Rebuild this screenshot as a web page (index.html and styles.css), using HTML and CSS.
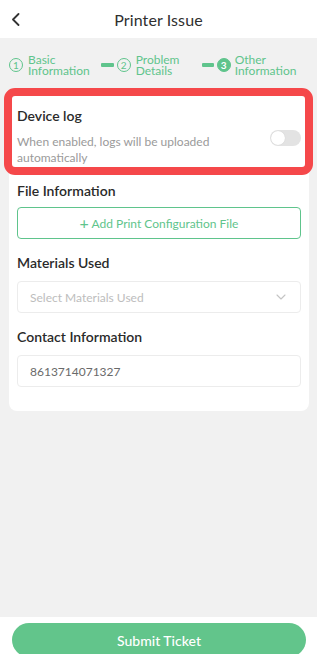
FILE: index.html
```html
<!DOCTYPE html>
<html lang="en">
<head>
<meta charset="utf-8">
<title>Printer Issue</title>
<link rel="stylesheet" href="styles.css">
</head>
<body>
<div class="page">
  <header class="topbar">
    <span class="back">
      <svg width="9" height="13" viewBox="0 0 9 13"><path d="M7.5 1 L2 6.5 L7.5 12" fill="none" stroke="#333" stroke-width="1.8" stroke-linecap="round" stroke-linejoin="round"/></svg>
    </span>
    <h1 class="title">Printer Issue</h1>
  </header>

  <main class="main">
    <div class="steps">
      <div class="step">
        <span class="circle">1</span>
        <span class="step-text"><span class="line">Basic</span><span class="line">Information</span></span>
      </div>
      <span class="dash dash-1"></span>
      <div class="step">
        <span class="circle">2</span>
        <span class="step-text step-text-2"><span class="line">Problem</span><span class="line">Details</span></span>
      </div>
      <span class="dash dash-2"></span>
      <div class="step">
        <span class="circle circle-active">3</span>
        <span class="step-text"><span class="line">Other</span><span class="line">Information</span></span>
      </div>
    </div>

    <section class="card">
      <div class="device-log">
        <div class="device-text">
          <div class="label">Device log</div>
          <div class="desc">When enabled, logs will be uploaded automatically</div>
        </div>
        <span class="toggle"><span class="knob"></span></span>
        <div class="highlight"></div>
      </div>

      <div class="label">File Information</div>
      <button class="add-file"><span class="plus">+</span> Add Print Configuration File</button>

      <div class="label label-gap">Materials Used</div>
      <div class="field select">
        <span class="placeholder">Select Materials Used</span>
        <svg width="10" height="6" viewBox="0 0 10 6"><path d="M1 1 L5 5 L9 1" fill="none" stroke="#c4c4c4" stroke-width="1.1" stroke-linecap="round" stroke-linejoin="round"/></svg>
      </div>

      <div class="label label-gap">Contact Information</div>
      <div class="field">
        <span class="value">8613714071327</span>
      </div>
    </section>
  </main>

  <footer class="footer">
    <button class="submit">Submit Ticket</button>
  </footer>
</div>
</body>
</html>
```

FILE: styles.css
```css
* { box-sizing: border-box; }
html, body {
  margin: 0;
  padding: 0;
  height: 654px;
  overflow: hidden;
}
body {
  font-family: Lato, "Noto Sans", sans-serif;
  background: #f1f1f1;
  color: #333;
}
.page {
  display: flex;
  flex-direction: column;
  height: 660px;
}
.topbar {
  height: 38px;
  background: #fff;
  display: flex;
  align-items: center;
  justify-content: center;
  position: relative;
}
.back {
  position: absolute;
  left: 11px;
  top: 13px;
  display: flex;
}
.title {
  margin: 0;
  font-size: 16px;
  font-weight: 400;
  color: #2f2f2f;
  letter-spacing: 0.1px;
}
.main {
  flex: 1;
}
.steps {
  display: flex;
  align-items: flex-start;
  padding: 16px 0 0 9px;
  height: 56px;
  color: #5fc48c;
}
.step {
  display: flex;
  align-items: center;
  height: 22px;
}
.circle {
  width: 14px;
  height: 14px;
  border: 1px solid #5fc48c;
  border-radius: 50%;
  font-size: 10px;
  line-height: 12px;
  text-align: center;
  color: #5fc48c;
  margin-right: 5px;
  flex: none;
}
.circle-active {
  background: #5fc48c;
  color: #fff;
  font-weight: 700;
  margin-right: 4px;
}
.step-text {
  display: flex;
  flex-direction: column;
  font-size: 12px;
}
.line {
  display: block;
  height: 11px;
  line-height: 11px;
  overflow: visible;
}
.step-text-2 {
  min-width: 63px;
}
.dash {
  width: 13px;
  height: 4px;
  border-radius: 1px;
  background: #5fc48c;
  margin-top: 9px;
  margin-right: 3px;
}
.dash-1 { margin-left: 11px; }
.dash-2 { margin-left: 3px; width: 12px; }

.card {
  margin: 0 8px 0 9px;
  background: #fff;
  border-radius: 8px;
  padding: 12px 8px 24px;
}
.device-log {
  position: relative;
  display: flex;
  align-items: center;
  justify-content: space-between;
  padding-bottom: 15px;
}
.device-text {
  max-width: 232px;
}
.label {
  font-size: 14px;
  line-height: 20px;
  font-weight: 600;
  color: #2a2a2a;
}
.label-gap {
  margin-top: 14px;
}
.desc {
  margin-top: 8px;
  font-size: 12px;
  line-height: 16px;
  color: #9a9a9a;
}
.toggle {
  width: 31px;
  height: 16px;
  border-radius: 8px;
  background: #e3e3e3;
  position: relative;
  margin-top: 4px;
  flex: none;
}
.knob {
  position: absolute;
  left: 1px;
  top: 1px;
  width: 14px;
  height: 14px;
  border-radius: 50%;
  background: #fff;
  box-shadow: 0 0 1px rgba(0,0,0,0.15);
}
.highlight {
  position: absolute;
  left: -13px;
  right: -12px;
  top: -18px;
  bottom: 6px;
  border: 8px solid #f5484a;
  border-radius: 11px;
  pointer-events: none;
}
.add-file {
  display: block;
  width: 100%;
  height: 32px;
  margin-top: 6px;
  border: 1px solid #5fc48c;
  border-radius: 4px;
  background: #fff;
  color: #5fc48c;
  font-family: inherit;
  font-size: 12px;
}
.plus {
  font-size: 16px;
  line-height: 12px;
  vertical-align: -1px;
}
.field {
  margin-top: 8px;
  height: 32px;
  border: 1px solid #ececec;
  border-radius: 4px;
  display: flex;
  align-items: center;
  justify-content: space-between;
  padding: 0 14px 0 12px;
  font-size: 12px;
}
.placeholder {
  color: #bdbdbd;
}
.value {
  color: #6a6a6a;
}
.footer {
  background: #fff;
  padding: 6px 11px 0 12px;
  height: 43px;
}
.submit {
  display: block;
  width: 100%;
  height: 34px;
  border: none;
  border-radius: 17px;
  background: #62c58b;
  color: #fff;
  font-family: inherit;
  font-size: 14px;
  font-weight: 500;
}
```
